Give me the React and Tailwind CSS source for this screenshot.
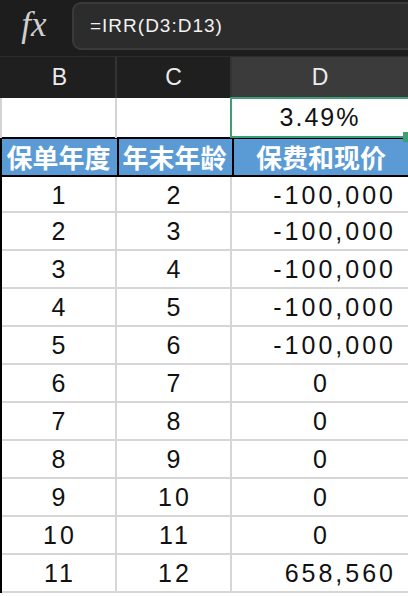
import React from "react";

const rows = [
  [1, 2, "-100,000", "r"],
  [2, 3, "-100,000", "r"],
  [3, 4, "-100,000", "r"],
  [4, 5, "-100,000", "r"],
  [5, 6, "-100,000", "r"],
  [6, 7, "0", "c"],
  [7, 8, "0", "c"],
  [8, 9, "0", "c"],
  [9, 10, "0", "c"],
  [10, 11, "0", "c"],
  [11, 12, "658,560", "r"],
];

const num = { fontFamily: '"Liberation Sans", Arial, sans-serif' };
const cjk = { fontFamily: '"Noto Sans CJK SC", sans-serif' };

export default function App() {
  return (
    <div className="w-[408px] h-[596px] overflow-hidden bg-white" style={num}>
      {/* formula bar */}
      <div className="h-[56px] bg-[#1d1d1d] flex items-start">
        <div className="w-[72px] h-[52px] flex items-center justify-center">
          <span
            className="text-[#cfcfcf] text-[35px] italic leading-none -mt-[4px] -ml-[4px]"
            style={{ fontFamily: '"Liberation Serif", "DejaVu Serif", serif' }}
          >
            fx
          </span>
        </div>
        <div className="flex-1 mt-[2px] mr-[-12px] h-[48px] rounded-[9px] border-2 border-[#3a3a3a] bg-[#2c2c2c] flex items-center pl-[16px]">
          <span className="text-[#f2f2f2] text-[19px] tracking-[1px]">=IRR(D3:D13)</span>
        </div>
      </div>

      {/* column headers */}
      <div className="grid grid-cols-[117px_115px_176px] h-[42px] bg-[#1f1f1f] border-t border-[#2c2c2c]">
        <div className="border-r-2 border-[#333] flex items-center justify-center text-[#ececec] text-[23px] pl-[4px]">B</div>
        <div className="border-r-2 border-[#333] flex items-center justify-center text-[#ececec] text-[23px]">C</div>
        <div className="bg-[#3b3b3b] flex items-center justify-center text-[#ececec] text-[23px]">D</div>
      </div>

      {/* row 2 */}
      <div className="grid grid-cols-[117px_115px_176px] h-[39px]">
        <div className="border-r-2 border-l-2 border-[#d4d4d4]" />
        <div className="border-r-2 border-[#d4d4d4]" />
        <div className="relative flex items-center justify-center text-[#111] text-[25px] tracking-[2px] border-2 border-r-0 border-[#3f9e78] -ml-[2px] -mt-[1px] h-[41px]">
          3.49%
          <div className="absolute right-0 bottom-[-6px] w-[5px] h-[10px] bg-[#3f9e78]" />
        </div>
      </div>

      {/* header row */}
      <div
        className="grid grid-cols-[117px_115px_176px] h-[40px] bg-[#5b9bd5] border-t-2 border-b-2 border-black border-l-2"
        style={cjk}
      >
        <div className="border-r-2 border-black flex items-center justify-center text-white text-[26px] font-bold leading-none -ml-[2px]">
          保单年度
        </div>
        <div className="border-r-2 border-black flex items-center justify-center text-white text-[26px] font-bold leading-none -ml-[2px]">
          年末年龄
        </div>
        <div className="flex items-center justify-center text-white text-[26px] font-bold leading-none -ml-[2px]">
          保费和现价
        </div>
      </div>

      {/* data rows */}
      {rows.map(([a, b, c, al], i) => (
        <div
          key={i}
          className={`grid grid-cols-[117px_115px_176px] ${i === 0 ? "h-[36px]" : "h-[38px]"} border-b-2 border-[#d6d6d6] text-[25px] text-[#111]`}
        >
          <div className="border-l-2 border-l-black border-r-2 border-r-[#d6d6d6] flex items-center justify-center tracking-[3px] pl-[3px]">
            {a}
          </div>
          <div className="border-r-2 border-[#d6d6d6] flex items-center justify-center tracking-[3px] pl-[3px]">
            {b}
          </div>
          <div
            className={`flex items-center tracking-[3px] ${al === "r" ? "justify-end pr-[12px]" : "justify-center pl-[3px]"}`}
          >
            {c}
          </div>
        </div>
      ))}
    </div>
  );
}
